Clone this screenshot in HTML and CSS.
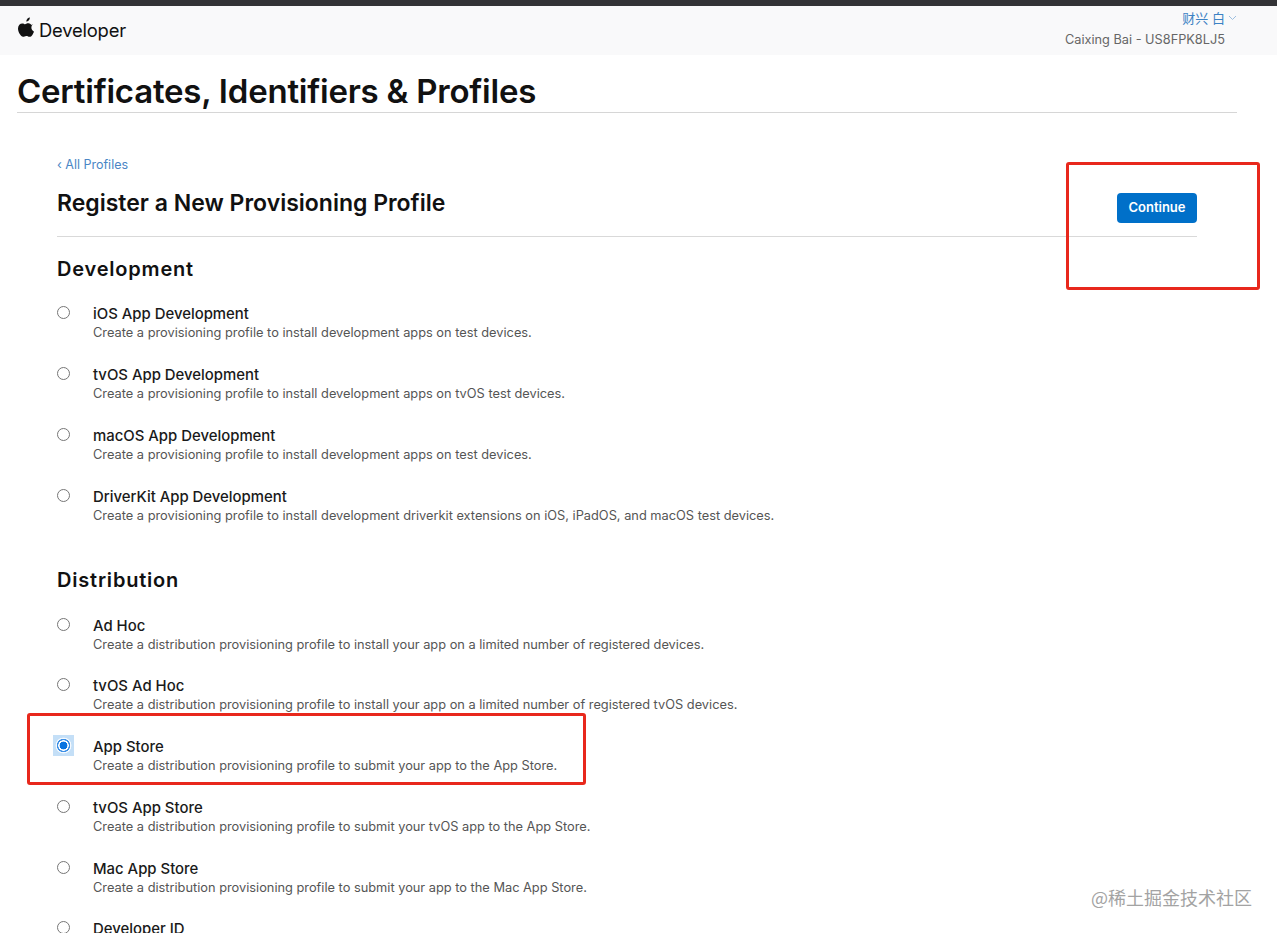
FILE: index.html
```html
<!DOCTYPE html>
<html lang="en">
<head>
<meta charset="utf-8">
<title>Certificates, Identifiers &amp; Profiles</title>
<link rel="stylesheet" href="styles.css">
</head>
<body>
<div class="topbar"></div>
<header class="header">
  <div class="brand">
    <svg class="apple" viewBox="0 0 814 1000" aria-hidden="true"><path d="M788 341c-6 4-108 62-108 190 0 149 130 201 134 203-1 3-21 72-69 142-43 62-87 123-156 123s-87-40-166-40c-77 0-105 42-168 42s-107-58-157-128C40 791 0 680 0 575c0-169 110-258 218-258 57 0 105 38 141 38 34 0 88-40 153-40 25 0 113 2 171 85zM554 160c27-32 46-76 46-120 0-6-1-12-2-17-44 2-96 29-127 65-25 28-48 72-48 117 0 7 1 13 2 16 3 0 8 1 12 1 39 0 89-27 117-62z"/></svg>
    <span class="brand-name">Developer</span>
  </div>
  <div class="account">
    <div class="account-user">财兴 白<svg class="chev" viewBox="0 0 9 6" aria-hidden="true"><path d="M1 1l3.5 3.5L8 1"/></svg></div>
    <div class="account-team">Caixing Bai - US8FPK8LJ5</div>
  </div>
</header>
<div class="title-wrap"><h1 class="title">Certificates, Identifiers &amp; Profiles</h1></div>
<main class="content">
  <a class="back" href="#">‹&nbsp;All Profiles</a>
  <div class="page-head">
    <h2 class="page-title">Register a New Provisioning Profile</h2>
    <button class="continue" type="button">Continue</button>
  </div>
  <section class="group">
    <h3 class="group-title">Development</h3>
    <label class="option"><input class="radio" type="radio" name="p"><span><span class="opt-name">iOS App Development</span><span class="opt-desc">Create a provisioning profile to install development apps on test devices.</span></span></label>
    <label class="option"><input class="radio" type="radio" name="p"><span><span class="opt-name">tvOS App Development</span><span class="opt-desc">Create a provisioning profile to install development apps on tvOS test devices.</span></span></label>
    <label class="option"><input class="radio" type="radio" name="p"><span><span class="opt-name">macOS App Development</span><span class="opt-desc">Create a provisioning profile to install development apps on test devices.</span></span></label>
    <label class="option"><input class="radio" type="radio" name="p"><span><span class="opt-name">DriverKit App Development</span><span class="opt-desc">Create a provisioning profile to install development driverkit extensions on iOS, iPadOS, and macOS test devices.</span></span></label>
  </section>
  <section class="group group-dist">
    <h3 class="group-title group-title-dist">Distribution</h3>
    <label class="option option-tight"><input class="radio" type="radio" name="p"><span><span class="opt-name">Ad Hoc</span><span class="opt-desc">Create a distribution provisioning profile to install your app on a limited number of registered devices.</span></span></label>
    <label class="option"><input class="radio" type="radio" name="p"><span><span class="opt-name">tvOS Ad Hoc</span><span class="opt-desc">Create a distribution provisioning profile to install your app on a limited number of registered tvOS devices.</span></span></label>
    <label class="option"><input class="radio radio-on" type="radio" name="p" checked><span><span class="opt-name">App Store</span><span class="opt-desc">Create a distribution provisioning profile to submit your app to the App Store.</span></span></label>
    <label class="option"><input class="radio" type="radio" name="p"><span><span class="opt-name">tvOS App Store</span><span class="opt-desc">Create a distribution provisioning profile to submit your tvOS app to the App Store.</span></span></label>
    <label class="option option-tight"><input class="radio" type="radio" name="p"><span><span class="opt-name">Mac App Store</span><span class="opt-desc">Create a distribution provisioning profile to submit your app to the Mac App Store.</span></span></label>
    <label class="option"><input class="radio" type="radio" name="p"><span><span class="opt-name">Developer ID</span></span></label>
  </section>
</main>
<div class="mark mark-continue"></div>
<div class="mark mark-store"></div>
<div class="watermark">@稀土掘金技术社区</div>
</body>
</html>
```
FILE: styles.css
```css
* { box-sizing: border-box; }
html, body { margin: 0; padding: 0; height: 933px; overflow: hidden; background: #fff; }
body { position: relative; font-family: Inter, "Noto Sans CJK SC", sans-serif; color: #111; }

.topbar { height: 6px; background: #333336; }
.header {
  height: 49px; background: #f9f9fa; display: flex; justify-content: space-between;
  padding: 0 52px 0 18px;
}
.brand { display: flex; align-items: flex-start; padding-top: 11px; }
.apple { width: 16px; height: 20px; margin-right: 5px; fill: #111; }
.brand-name { font-size: 18.4px; line-height: 26px; letter-spacing: -0.2px; color: #111; }
.account { display: flex; flex-direction: column; align-items: flex-end; }
.account-user {
  font-size: 13px; line-height: 16px; color: #3c82c4; margin-top: 4px; margin-right: -12px;
  display: flex; align-items: center;
}
.chev { width: 9px; height: 6px; margin-left: 3px; fill: none; stroke: #9dbfe0; stroke-width: 1; }
.account-team { font-size: 12.75px; line-height: 18px; color: #666; margin-top: 5px; }

.title-wrap { margin: 0 40px 0 17px; height: 58px; border-bottom: 1px solid #d6d6d6; }
.title { margin: 0; font-size: 33px; line-height: 72px; font-weight: 600; letter-spacing: -0.23px; color: #111; }

.content { width: 1140px; margin-left: 57px; }
.back { display: block; margin-top: 43px; font-size: 12.5px; line-height: 18px; color: #4a86c5; text-decoration: none; }
.page-head {
  display: flex; justify-content: space-between; align-items: flex-start;
  height: 61px; margin-top: 2px; border-bottom: 1px solid #d9d9d9;
}
.page-title { margin: 12px 0 0; font-size: 23px; line-height: 30px; font-weight: 600; color: #111; }
.continue {
  width: 80px; height: 30px; margin-top: 17px; border: 0; border-radius: 4px; background: #0070c9;
  color: #fff; font: 600 13px Inter, sans-serif; padding: 0 0 3px;
}

.group { padding-top: 18px; }
.group-dist { padding-top: 21px; }
.group-title { margin: 0 0 18px; font-size: 20px; line-height: 28px; font-weight: 600; letter-spacing: 0.8px; color: #111; }
.group-title-dist { margin-bottom: 19px; }
.option { display: flex; align-items: flex-start; height: 61px; cursor: pointer; }
.option-tight { height: 60px; }
.radio {
  appearance: none; width: 13px; height: 13px; margin: 5px 23px 0 0; flex: none;
  border: 1px solid #767676; border-radius: 50%; background: #fff;
}
.radio-on {
  width: 21px; height: 21px; margin: 1px 19px 0 -4px; border: 0; border-radius: 0;
  background: radial-gradient(circle, #0a74e0 0 3.6px, #fff 4.2px 5px, #3d90e6 5.5px 6.4px, #f4f9fe 6.9px 7.6px, #c4dff7 8.2px);
}
.opt-name { display: block; font-size: 14.9px; line-height: 20px; font-weight: 500; color: #1a1a1a; margin-top: 3px; }
.opt-desc { display: block; font-size: 12.8px; line-height: 17px; color: #555; }

.mark { position: absolute; border: 3px solid #e8281c; border-radius: 3px; }
.mark-continue { left: 1066px; top: 162px; width: 194px; height: 128px; }
.mark-store { left: 27px; top: 713px; width: 559px; height: 72px; }
.watermark {
  position: absolute; left: 1091px; top: 885px; font-size: 18px; line-height: 24px; color: #a3a3a3;
  font-family: "Noto Sans CJK SC", sans-serif;
}
```
